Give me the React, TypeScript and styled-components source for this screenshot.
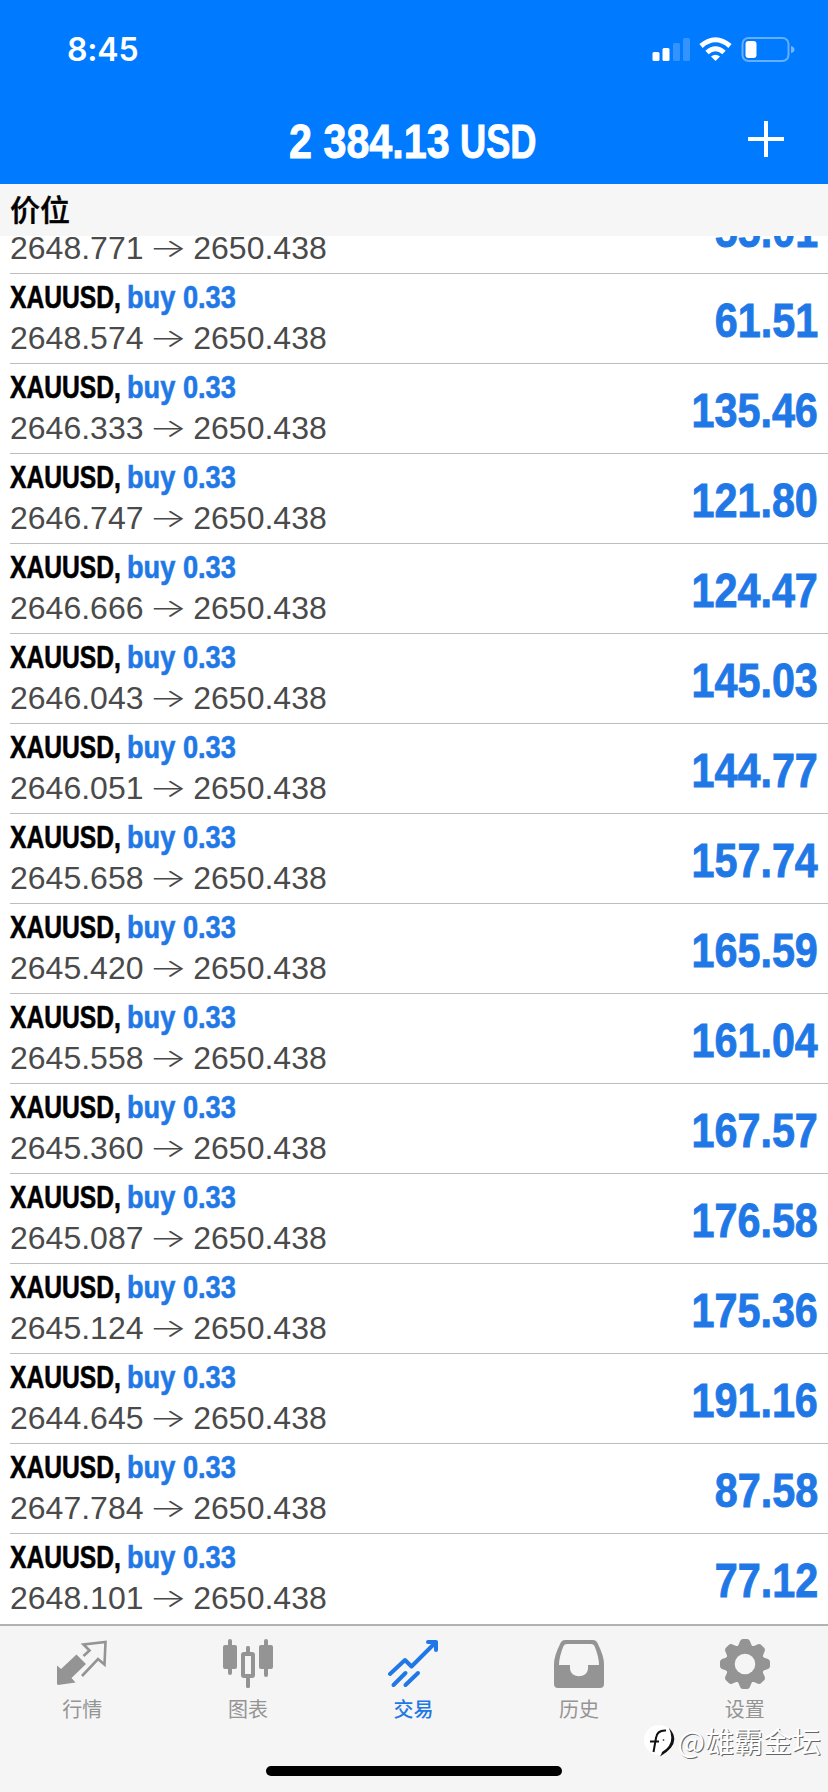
import React from "react";
import styled, { createGlobalStyle } from "styled-components";

const GlobalStyle = createGlobalStyle`
  html, body { margin: 0; padding: 0; background: #fff; }
  body { font-family: "Liberation Sans", "Noto Sans CJK SC", sans-serif; overflow: hidden; }
  * { box-sizing: border-box; }
`;

const Screen = styled.div`
  position: relative;
  width: 828px;
  height: 1792px;
  display: flex;
  flex-direction: column;
  background: #fff;
  overflow: hidden;
`;

/* Bold text drawn in a condensed width; $width is the room it takes in the line. */
const Condensed = styled.span<{ $scale: number; $width: number }>`
  display: block;
  width: ${(p) => p.$width}px;
  transform: scaleX(${(p) => p.$scale});
  transform-origin: left center;
  white-space: nowrap;
`;

const Header = styled.header`
  height: 184px;
  flex: none;
  background: #007aff;
  color: #fff;
  display: flex;
  flex-direction: column;
`;

const StatusBar = styled.div`
  height: 96px;
  display: flex;
  justify-content: space-between;
  padding: 31px 33px 0 67px;
`;

const Clock = styled.span`
  font: 600 32px/38px Inter, sans-serif;
  letter-spacing: -0.2px;
`;

const StatusIcons = styled.svg`
  width: 144px;
  height: 30px;
  margin-top: 4px;
`;

const TitleBar = styled.div`
  display: grid;
  grid-template-columns: 1fr auto 1fr;
  align-items: center;
  height: 86px;
  padding: 0 43px 0 43px;
`;

const Title = styled.h1`
  grid-column: 2;
  display: flex;
  gap: 9px;
  margin: 0;
  padding-top: 5px;
  font: bold 48px/56px "Liberation Sans", sans-serif;
  -webkit-text-stroke: 0.9px currentColor;
`;

const AddButton = styled.button`
  grid-column: 3;
  justify-self: end;
  width: 38px;
  height: 38px;
  padding: 0;
  border: 0;
  background: none;
  color: #fff;
`;

const SectionHeader = styled.div`
  height: 52px;
  flex: none;
  padding: 0 10px;
  background: #f6f6f6;
  color: #000;
  font: 500 30px/49px "Noto Sans CJK SC", sans-serif;
  -webkit-text-stroke: 0.4px currentColor;
`;

const Positions = styled.div`
  height: 1388px;
  flex: none;
  overflow: hidden;
  display: flex;
  flex-direction: column;
  justify-content: flex-end;
`;

const Row = styled.div`
  height: 90px;
  flex: none;
  margin-left: 10px;
  padding-right: 10px;
  display: flex;
  justify-content: space-between;
  border-bottom: 1px solid #bdbdbf;
  &:last-child { border-bottom-color: transparent; }
`;

const Deal = styled.div`
  padding-top: 3px;
`;

const Heading = styled.div`
  display: flex;
  gap: 7px;
  font: bold 32px/40px "Liberation Sans", sans-serif;
  color: #000;
  -webkit-text-stroke: 0.6px currentColor;
`;

const Side = styled(Condensed)`
  color: #1f78e6;
`;

const Prices = styled.div`
  font: 32px/42px "Liberation Sans", sans-serif;
  color: #4a4a4a;
  white-space: nowrap;
`;

const Arrow = styled.span`
  display: inline-block;
  width: 32px;
  text-align: center;
  font: 300 32px/32px Inter, sans-serif;
  transform: scale(1.26, 0.8);
`;

const Profit = styled.div`
  font: bold 48px/56px "Liberation Sans", sans-serif;
  padding-top: 19px;
  color: #1f78e6;
  transform: scaleX(0.86);
  transform-origin: right center;
  -webkit-text-stroke: 0.9px currentColor;
`;

const TabBar = styled.nav`
  height: 168px;
  flex: none;
  display: grid;
  grid-template-columns: repeat(5, 1fr);
  background: #f5f5f5;
  border-top: 2px solid #b2b2b2;
`;

const Tab = styled.a<{ $active?: boolean }>`
  display: flex;
  flex-direction: column;
  align-items: center;
  padding-top: 13px;
  padding-right: 1px;
  gap: 7px;
  color: ${(p) => (p.$active ? "#1f78e6" : "#949494")};
  font: ${(p) => (p.$active ? 500 : 400)} 20px/26px "Noto Sans CJK SC", sans-serif;
  svg { display: block; flex: none; }
`;

const HomeIndicator = styled.div`
  position: absolute;
  left: 266px;
  bottom: 16px;
  width: 296px;
  height: 10px;
  border-radius: 5px;
  background: #000;
`;

const Watermark = styled.div`
  position: absolute;
  right: 7px;
  bottom: 34px;
  display: flex;
  align-items: center;
  color: #fff;
  font: 400 29px/36px "Noto Sans CJK SC", sans-serif;
  text-shadow: 1px 1px 0 #666;
`;

const deals: [string, string][] = [
  ["2648.771", "55.01"],
  ["2648.574", "61.51"],
  ["2646.333", "135.46"],
  ["2646.747", "121.80"],
  ["2646.666", "124.47"],
  ["2646.043", "145.03"],
  ["2646.051", "144.77"],
  ["2645.658", "157.74"],
  ["2645.420", "165.59"],
  ["2645.558", "161.04"],
  ["2645.360", "167.57"],
  ["2645.087", "176.58"],
  ["2645.124", "175.36"],
  ["2644.645", "191.16"],
  ["2647.784", "87.58"],
  ["2648.101", "77.12"],
];

const QuotesIcon = () => (
  <svg width="50" height="50" viewBox="0 0 50 50">
    <path d="M0 26.500 L4 30 L19.500 15.500 L29 25 L14.500 39 L18.500 43.500 L1 46 L0 45 Z" fill="currentColor" />
    <path d="M26.500 17 L32.500 11.500 L26.500 5.500 L48.500 3 L47.500 25.500 L41 20 L25 37" fill="none" stroke="currentColor" strokeWidth="2.600" />
  </svg>
);

const ChartIcon = () => (
  <svg width="50" height="50" viewBox="0 0 50 50" fill="currentColor">
    <rect x="5" y="0" width="4" height="36" rx="2" />
    <rect x="0" y="6" width="14" height="24" rx="2" />
    <rect x="41" y="0" width="4" height="38" rx="2" />
    <rect x="36" y="6" width="14" height="24" rx="2" />
    <rect x="23" y="7" width="4" height="8" rx="1.500" />
    <rect x="23" y="37" width="4" height="12" rx="1.500" />
    <rect x="20" y="15" width="10" height="22" rx="1" fill="none" stroke="currentColor" strokeWidth="4" />
  </svg>
);

const TradeIcon = () => (
  <svg width="50" height="50" viewBox="0 0 50 50" fill="none" stroke="currentColor" strokeWidth="4" strokeLinecap="round" strokeLinejoin="round">
    <path d="M2 35 L17 21 L23.500 27.500 L47 4" />
    <path d="M40 3 H48 V11" />
    <path d="M5.500 46 L17.500 34 M17.500 46 L30 34" />
  </svg>
);

const HistoryIcon = () => (
  <svg width="50" height="50" viewBox="0 0 50 50">
    <path fillRule="evenodd" fill="currentColor" d="M11 1 H39 Q42 1 43.500 4 Q50 17 50 25 V45 Q50 49 46 49 H4 Q0 49 0 45 V25 Q0 17 6.500 4 Q8 1 11 1 Z M13 5 Q10.500 5 9.500 7 Q5 18 5 26 H16 V29 C16 40 34 40 34 29 V26 H45 Q45 18 40.500 7 Q39.500 5 37 5 Z" />
  </svg>
);

const SettingsIcon = () => (
  <svg width="50" height="50" viewBox="0 0 50 50">
    <g fill="currentColor">
      {[0, 45, 90, 135, 180, 225, 270, 315].map((a) => (
        <path key={a} transform={`rotate(${a} 25 25)`} d="M16.500 8.500 Q19 6 19.500 3.500 Q20.500 0 23 0 H27 Q29.500 0 30.500 3.500 Q31 6 33.500 8.500 L29 16 H21 Z" />
      ))}
      <circle cx="25" cy="25" r="19" />
    </g>
    <circle cx="25" cy="25" r="10.300" fill="#f5f5f5" />
  </svg>
);

const tabs = [
  { label: "行情", Icon: QuotesIcon },
  { label: "图表", Icon: ChartIcon },
  { label: "交易", Icon: TradeIcon, active: true },
  { label: "历史", Icon: HistoryIcon },
  { label: "设置", Icon: SettingsIcon },
];

export default function App() {
  return (
    <Screen>
      <GlobalStyle />
      <Header>
        <StatusBar>
          <Clock>8:45</Clock>
          <StatusIcons viewBox="0 0 144 30" fill="#fff">
            <rect x="1.500" y="17" width="7" height="9" rx="1.500" />
            <rect x="11.500" y="13" width="7" height="13" rx="1.500" />
            <rect x="22" y="8" width="7" height="18" rx="1.500" opacity="0.2" />
            <rect x="32" y="3" width="7" height="23" rx="1.500" opacity="0.2" />
            <g fill="none" stroke="#fff" strokeWidth="5">
              <path d="M50 11 Q64.500 -1.500 79 11" />
              <path d="M56 17.500 Q64.500 10 73 17.500" />
            </g>
            <path d="M60 21.500 Q64.500 18 69 21.500 L64.500 26 Z" />
            <rect x="91.500" y="3" width="46" height="23" rx="6" fill="none" stroke="#fff" strokeOpacity="0.4" strokeWidth="2" />
            <rect x="94.500" y="6" width="11" height="17" rx="3" />
            <path d="M140 11 Q143.500 12 143.500 14.500 Q143.500 17 140 18 Z" opacity="0.45" />
          </StatusIcons>
        </StatusBar>
        <TitleBar>
          <Title>
            <Condensed $scale={0.86} $width={162}>2 384.13</Condensed>
            <Condensed $scale={0.755} $width={79}>USD</Condensed>
          </Title>
          <AddButton aria-label="Add">
            <svg width="38" height="38" viewBox="0 0 38 38" stroke="currentColor" strokeWidth="4">
              <path d="M19 1 V37 M1 19 H37" />
            </svg>
          </AddButton>
        </TitleBar>
      </Header>
      <SectionHeader>价位</SectionHeader>
      <Positions>
        {deals.map(([open, profit]) => (
          <Row key={open}>
            <Deal>
              <Heading>
                <Condensed $scale={0.77} $width={110}>XAUUSD,</Condensed>
                <Side $scale={0.85} $width={110}>buy 0.33</Side>
              </Heading>
              <Prices>
                {open} <Arrow>→</Arrow> 2650.438
              </Prices>
            </Deal>
            <Profit>{profit}</Profit>
          </Row>
        ))}
      </Positions>
      <TabBar>
        {tabs.map(({ label, Icon, active }) => (
          <Tab key={label} $active={active}>
            <Icon />
            {label}
          </Tab>
        ))}
      </TabBar>
      <HomeIndicator />
      <Watermark>
        <svg width="36" height="36" viewBox="0 0 36 36">
          <circle cx="17" cy="18" r="15" fill="#fff" />
          <path d="M24 8.500 Q15 8 14 16 L11.500 30 M8 19.500 H17" fill="none" stroke="#111" strokeWidth="2" />
          <path d="M27 6 Q41 21 18 34.500 Q20 31 20 30 Q34 22 27 6 Z" fill="#111" />
          <circle cx="21.500" cy="18" r="0.900" fill="#555" />
        </svg>
        @雄霸金坛
      </Watermark>
    </Screen>
  );
}
